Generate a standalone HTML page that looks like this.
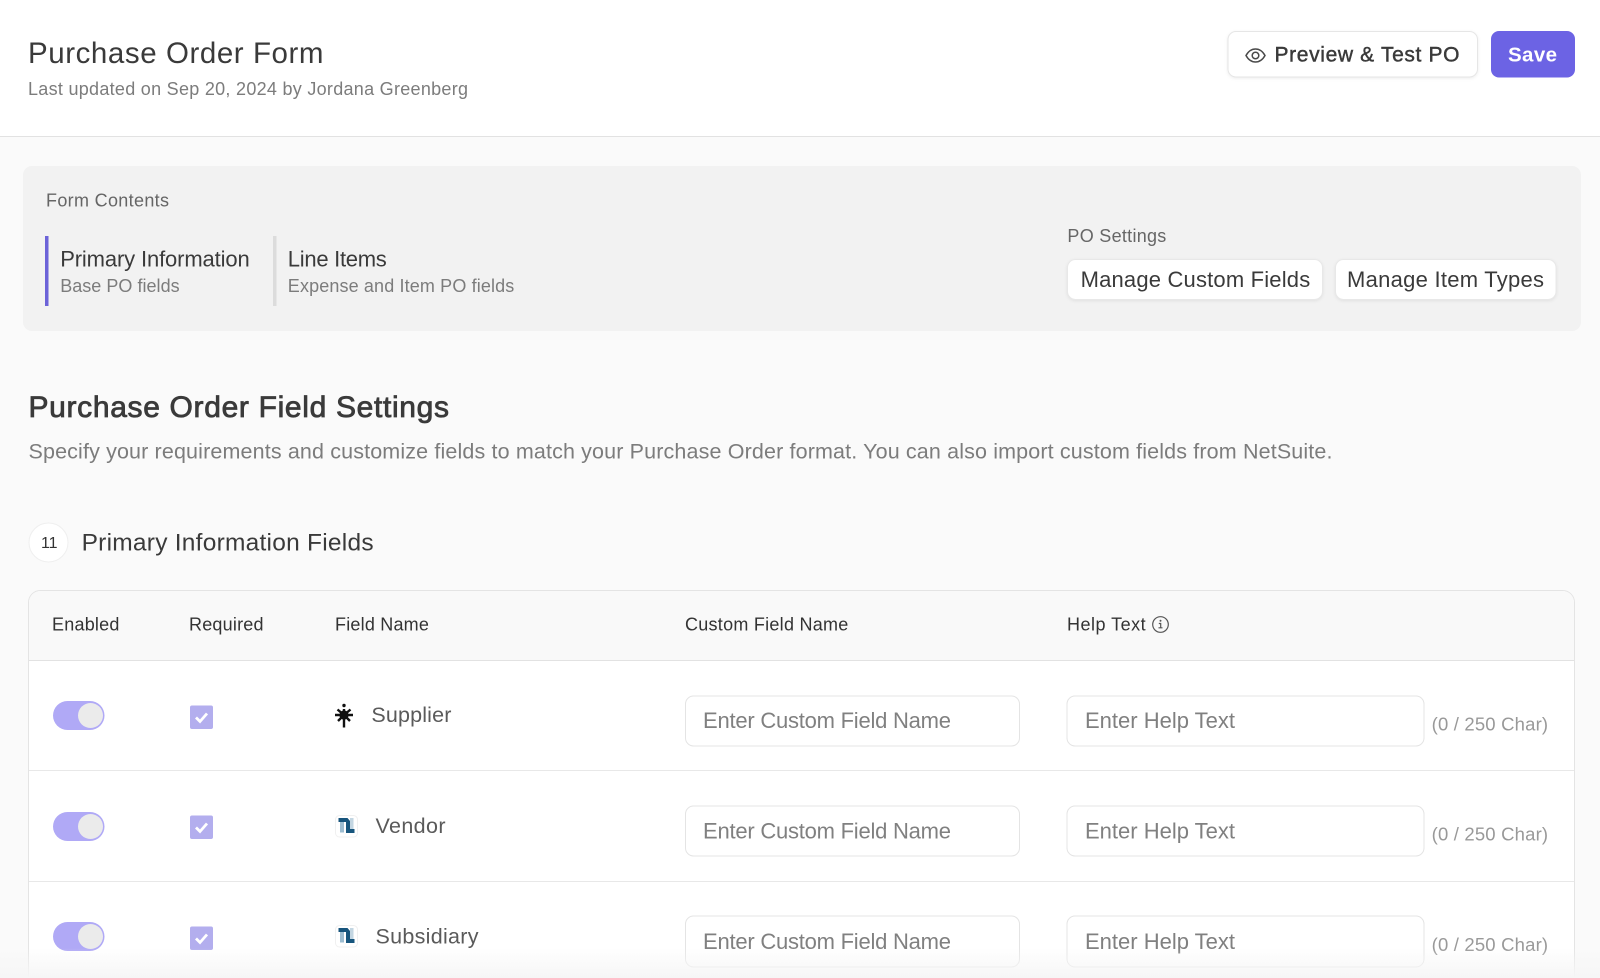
<!DOCTYPE html>
<html lang="en"><head><meta charset="utf-8"><title>Purchase Order Form</title>
<style>
html,body{margin:0;padding:0;width:1600px;height:978px;overflow:hidden;background:#fafafa}
svg{display:block}
text{font-family:"Liberation Sans",sans-serif;white-space:pre}
.sh{filter:drop-shadow(0 1px 1.500px rgba(0,0,0,.07))}
</style></head><body>
<svg width="1600" height="978" viewBox="0 0 1600 978" xmlns="http://www.w3.org/2000/svg">
<defs><linearGradient id="f" x1="0" y1="0" x2="0" y2="1"><stop offset="0" stop-color="#f6f6f6" stop-opacity="0"/><stop offset="1" stop-color="#f6f6f6"/></linearGradient></defs>
<rect width="1600" height="978" fill="#fafafa"/>
<rect width="1600" height="136" fill="#fff"/>
<rect y="136" width="1600" height="1" fill="#e2e2e2"/>
<text x="28" y="63" font-size="29.500" fill="#3a3a3a" textLength="295.500" lengthAdjust="spacing">Purchase Order Form</text>
<text x="28" y="95" font-size="18" fill="#7c7c7c" textLength="440" lengthAdjust="spacing">Last updated on Sep 20, 2024 by Jordana Greenberg</text>
<rect class="sh" x="1228" y="31.500" width="249.500" height="45.500" rx="8" fill="#fff" stroke="#e6e6e6"/>
<g fill="none" stroke="#4a4a4a" stroke-width="1.500"><path d="M1246 55.500c2.500-4.500 5.800-6.500 9.500-6.500s7 2 9.500 6.500c-2.500 4.500-5.800 6.500-9.500 6.500s-7-2-9.500-6.500z"/><circle cx="1255.500" cy="55.500" r="3.300"/></g>
<text x="1274.500" y="61.500" font-size="21" fill="#3a3a3a" stroke="#3a3a3a" stroke-width=".45" textLength="185" lengthAdjust="spacing">Preview &amp; Test PO</text>
<rect x="1491" y="31" width="84" height="46.500" rx="8" fill="#6c63e4"/>
<text x="1508" y="61.500" font-size="20.500" font-weight="700" fill="#fff" textLength="49" lengthAdjust="spacing">Save</text>

<rect x="23" y="166" width="1558" height="165" rx="9" fill="#f2f2f2"/>
<text x="46" y="206.500" font-size="18" fill="#666" textLength="123" lengthAdjust="spacing">Form Contents</text>
<rect x="45" y="236" width="3.500" height="70" fill="#6c63d8"/>
<rect x="273" y="236" width="3.500" height="70" fill="#dcdcdc"/>
<text x="60.200" y="266.500" font-size="22" fill="#3a3a3a" textLength="189.500" lengthAdjust="spacing">Primary Information</text>
<text x="60.200" y="292" font-size="18" fill="#7c7c7c" textLength="119.400" lengthAdjust="spacing">Base PO fields</text>
<text x="287.800" y="266.500" font-size="22" fill="#3a3a3a" textLength="99" lengthAdjust="spacing">Line Items</text>
<text x="287.800" y="292" font-size="18" fill="#7c7c7c" textLength="226.500" lengthAdjust="spacing">Expense and Item PO fields</text>
<text x="1067.400" y="242" font-size="18" fill="#666" textLength="98.900" lengthAdjust="spacing">PO Settings</text>
<rect class="sh" x="1067.500" y="259.500" width="255" height="40" rx="8" fill="#fff" stroke="#e8e8e8"/>
<rect class="sh" x="1335.500" y="259.500" width="220.500" height="40" rx="8" fill="#fff" stroke="#e8e8e8"/>
<text x="1080.600" y="287" font-size="22" fill="#3a3a3a" textLength="229.600" lengthAdjust="spacing">Manage Custom Fields</text>
<text x="1347" y="287" font-size="22" fill="#3a3a3a" textLength="197" lengthAdjust="spacing">Manage Item Types</text>

<text x="28.500" y="417" font-size="30" fill="#3a3a3a" stroke="#3a3a3a" stroke-width=".8" textLength="420.500" lengthAdjust="spacing">Purchase Order Field Settings</text>
<text x="28.500" y="458.500" font-size="21.500" fill="#7c7c7c" textLength="1304" lengthAdjust="spacing">Specify your requirements and customize fields to match your Purchase Order format. You can also import custom fields from NetSuite.</text>

<circle cx="48.500" cy="542.500" r="19.500" fill="#fff" stroke="#efefef"/>
<text x="41" y="548" font-size="16" fill="#333" style="font-kerning:none" textLength="16.500" lengthAdjust="spacing">11</text>
<text x="81.600" y="550.500" font-size="24.500" fill="#3a3a3a" textLength="292" lengthAdjust="spacing">Primary Information Fields</text>

<rect x="28.500" y="590.500" width="1546" height="420" rx="12" fill="#fff" stroke="#e4e4e4"/>
<path d="M29 660V602.500a11.500 11.500 0 0 1 11.500-11.500H1562.500a11.500 11.500 0 0 1 11.500 11.500V660z" fill="#f9f9f9"/>
<rect x="29" y="660" width="1545" height="1" fill="#e2e2e2"/>
<rect x="29" y="770" width="1545" height="1" fill="#e8e8e8"/>
<rect x="29" y="881" width="1545" height="1" fill="#e8e8e8"/>
<g font-size="18" fill="#333">
<text x="52" y="630.500" textLength="67.400" lengthAdjust="spacing">Enabled</text>
<text x="189" y="630.500" textLength="74.500" lengthAdjust="spacing">Required</text>
<text x="335" y="630.500" textLength="93.900" lengthAdjust="spacing">Field Name</text>
<text x="685" y="630.500" textLength="163.300" lengthAdjust="spacing">Custom Field Name</text>
<text x="1067" y="630.500" textLength="78.600" lengthAdjust="spacing">Help Text</text>
</g>
<g fill="none" stroke="#555" stroke-width="1.200"><circle cx="1160.500" cy="624.500" r="7.800"/><path d="M1158.800 623.500h1.900v4.200M1158.500 627.800h4"/></g>
<circle cx="1160.500" cy="620.800" r="1" fill="#555"/>

<!-- toggles -->
<g fill="#b0a9f6"><rect x="53" y="701" width="51.500" height="29" rx="14.500"/><rect x="53" y="812" width="51.500" height="29" rx="14.500"/><rect x="53" y="922" width="51.500" height="29" rx="14.500"/></g>
<g fill="#ebebeb"><circle cx="90.500" cy="715.500" r="12.500"/><circle cx="90.500" cy="826.500" r="12.500"/><circle cx="90.500" cy="936.500" r="12.500"/></g>
<!-- checkboxes -->
<g fill="#b3aeee"><rect x="190" y="705.500" width="23" height="23.500" rx="2"/><rect x="190" y="815.500" width="23" height="23.500" rx="2"/><rect x="190" y="926.500" width="23" height="23.500" rx="2"/></g>
<g fill="none" stroke="#fff" stroke-width="2.800"><path d="M196 717.500l4 4 7-8"/><path d="M196 827.500l4 4 7-8"/><path d="M196 938.500l4 4 7-8"/></g>

<!-- supplier logo -->
<circle cx="344" cy="705.500" r="1.700" fill="#111"/>
<circle cx="344" cy="715" r="4.600" fill="#111"/>
<g stroke="#111" stroke-width="2.400" fill="none"><path d="M344 715v12.500M344 715v-6M344 715l-6.500-5.500M344 715l6.500-5.500M344 715h-9M344 715h9M344 715l-6 6M344 715l6 6"/></g>
<!-- netsuite logos -->
<g><rect x="335.500" y="815.500" width="22" height="21.500" rx="4" fill="#fff" stroke="#f0f0f0"/><path d="M350 818h3.500v11H350z" fill="#c3d6e2"/><path d="M340 822h4v10.500h-4z" fill="#9dbdd1"/><path d="M338.500 818h9l2.500 3v8h4.500v4H346v-11h-7.500z" fill="#17557d"/></g>
<g><rect x="335.500" y="925.500" width="22" height="21.500" rx="4" fill="#fff" stroke="#f0f0f0"/><path d="M350 928h3.500v11H350z" fill="#c3d6e2"/><path d="M340 932h4v10.500h-4z" fill="#9dbdd1"/><path d="M338.500 928h9l2.500 3v8h4.500v4H346v-11h-7.500z" fill="#17557d"/></g>

<g font-size="21.500" fill="#5a5a5a">
<text x="371.400" y="722" textLength="80" lengthAdjust="spacing">Supplier</text>
<text x="375.500" y="833" textLength="70" lengthAdjust="spacing">Vendor</text>
<text x="375.500" y="943.500" textLength="103" lengthAdjust="spacing">Subsidiary</text>
</g>

<!-- inputs -->
<g fill="#fff" stroke="#e4e4e4">
<rect x="685.500" y="696" width="334" height="50" rx="8"/><rect x="685.500" y="806" width="334" height="50" rx="8"/><rect x="685.500" y="916" width="334" height="51" rx="8"/>
<rect x="1067" y="696" width="357" height="50" rx="8"/><rect x="1067" y="806" width="357" height="50" rx="8"/><rect x="1067" y="916" width="357" height="51" rx="8"/>
</g>
<g font-size="22" fill="#808080">
<text x="703" y="728" textLength="248" lengthAdjust="spacing">Enter Custom Field Name</text>
<text x="703" y="838.500" textLength="248" lengthAdjust="spacing">Enter Custom Field Name</text>
<text x="703" y="949" textLength="248" lengthAdjust="spacing">Enter Custom Field Name</text>
<text x="1085" y="728" textLength="150" lengthAdjust="spacing">Enter Help Text</text>
<text x="1085" y="838.500" textLength="150" lengthAdjust="spacing">Enter Help Text</text>
<text x="1085" y="949" textLength="150" lengthAdjust="spacing">Enter Help Text</text>
</g>
<g font-size="18.500" fill="#999">
<text x="1431.600" y="730.500" textLength="116.500" lengthAdjust="spacing">(0 / 250 Char)</text>
<text x="1431.600" y="840.500" textLength="116.500" lengthAdjust="spacing">(0 / 250 Char)</text>
<text x="1431.600" y="951" textLength="116.500" lengthAdjust="spacing">(0 / 250 Char)</text>
</g>
<rect x="0" y="948" width="1600" height="30" fill="url(#f)"/>
</svg>
</body></html>
